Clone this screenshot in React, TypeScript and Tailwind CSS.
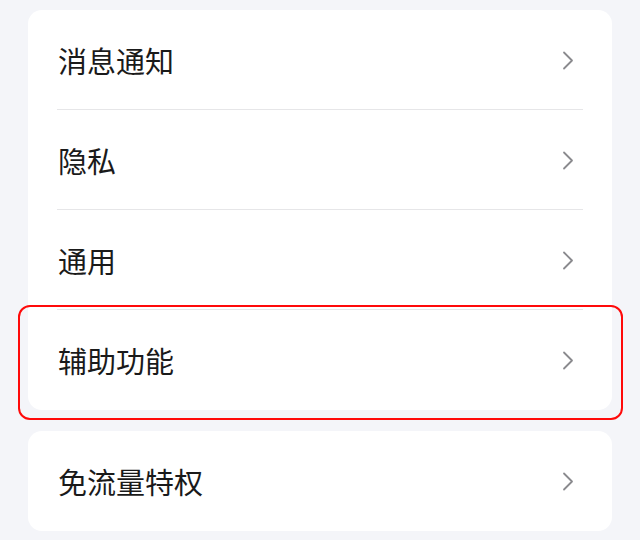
import React from 'react';

const rows = ['消息通知', '隐私', '通用', '辅助功能'];

const Chevron = () => (
  <svg width="12" height="19" viewBox="0 0 12 19" fill="none" className="shrink-0">
    <path d="M2 1.5L10 9.5L2 17.5" stroke="#8a8a8e" strokeWidth="1.8" strokeLinecap="round" strokeLinejoin="round" />
  </svg>
);

const Row = ({ label, last, highlight }: { label: string; last?: boolean; highlight?: boolean }) => (
  <div className="relative h-[100px] flex items-center justify-between pl-[30px] pr-[38px]">
    <span className="text-[29px] text-[#1a1a1a] leading-none">{label}</span>
    <Chevron />
    {!last && <div className="absolute bottom-0 left-[29px] right-[29px] h-px bg-[#e6e6e8]" />}
    {highlight && (
      <div className="absolute -left-[10px] -right-[11px] -top-[5px] -bottom-[10px] border-[2.5px] border-[#ff0a0a] rounded-[12px] pointer-events-none" />
    )}
  </div>
);

export default function App() {
  return (
    <div
      className="w-[640px] h-[540px] overflow-hidden bg-[#f4f5f9] px-[28px] pt-[10px]"
      style={{ fontFamily: '"Noto Sans CJK SC", "Noto Sans", sans-serif' }}
    >
      {/* Main settings card */}
      <div className="bg-white rounded-[14px]">
        {rows.map((r, i) => (
          <Row key={r} label={r} last={i === rows.length - 1} highlight={r === '辅助功能'} />
        ))}
      </div>

      {/* Second card */}
      <div className="bg-white rounded-[14px] mt-[21px]">
        <Row label="免流量特权" last />
      </div>
    </div>
  );
}
